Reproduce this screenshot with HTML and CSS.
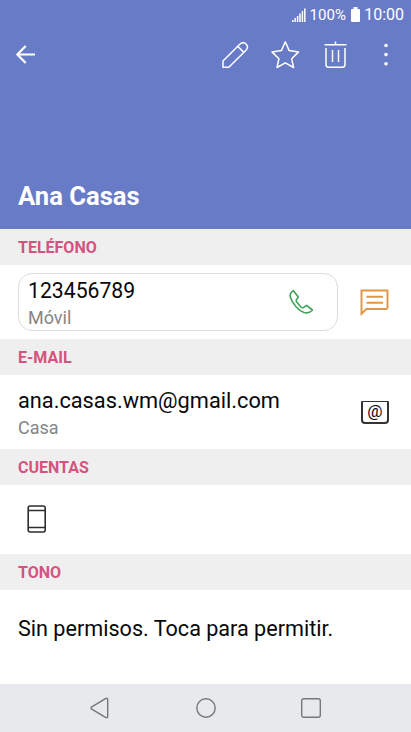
FILE: index.html
```html
<!DOCTYPE html>
<html lang="es">
<head>
<meta charset="utf-8">
<title>Ana Casas</title>
<link rel="stylesheet" href="styles.css">
</head>
<body>
<header class="hero">
  <div class="status">
    <svg class="signal" width="14" height="14" viewBox="0 0 14 14"><path d="M.8 12v2M3.200 10v4M5.600 8v6M8 5.500V14M10.400 3v11M12.800.5V14"/></svg>
    <span class="battery-text">100%</span>
    <svg class="battery" width="9" height="15" viewBox="0 0 9 15"><path d="M2.500 0h4v2H8q1 0 1 1v11q0 1-1 1H1q-1 0-1-1V3q0-1 1-1h1.500z"/></svg>
    <span class="time">10:00</span>
  </div>
  <div class="toolbar">
    <svg class="back" width="20" height="20" viewBox="0 0 20 20"><path d="M19 9.500H1.500M9.700 1L1.300 9.500l8.400 8.500"/></svg>
    <div class="actions">
      <svg width="30" height="30" viewBox="0 0 30 30"><path d="M3 27.300V21L19.800 4.200q3.200-3 6.200-.2t0 6.200L8.800 27.300zM17.700 6.300l6.100 6.100"/></svg>
      <svg width="30" height="30" viewBox="0 0 30 30"><path d="M15.300 1.800l3.900 8.800 9.400 1.300-6.900 6.900 1.900 8.700-8.300-4.700-8.300 4.700 1.900-8.700L2 11.900l9.400-1.300z"/></svg>
      <svg width="30" height="30" viewBox="0 0 30 30"><path d="M4.500 4.800h22M15.500 1.500v3M6 8v16.500q0 2.800 2.800 2.800h13.400q2.800 0 2.800-2.800V8M12.500 10v12M18.500 10v12"/></svg>
      <svg class="dots" width="30" height="30" viewBox="0 0 30 30"><circle cx="15" cy="5.500" r="1.800"/><circle cx="15" cy="14.600" r="1.800"/><circle cx="15" cy="23.800" r="1.800"/></svg>
    </div>
  </div>
  <h1>Ana Casas</h1>
</header>
<main>
  <h2>TELÉFONO</h2>
  <section class="row phone-row">
    <div class="phone-card">
      <div><p class="primary number">123456789</p><p class="secondary">Móvil</p></div>
      <svg class="call" width="28" height="28" viewBox="0 0 28 28"><path d="M6.300 2.600Q2.400 5 3.300 9C5.300 15.500 11.500 22.500 17 24.600q5 1.300 8.500-2.600l-5.900-4.600-3.300 2.300q-1.200.4-2.400-.7l-4.200-4.900q-.9-1.300-.4-2.200L11.300 9z"/></svg>
    </div>
    <svg class="message" width="29" height="27" viewBox="0 0 29 27"><path d="M1.500 1.500h26v17.300q0 1.200-1.200 1.200H6.300l-4.800 4.800zM6.500 7.700H23M6.500 13.700H23"/></svg>
  </section>
  <h2>E-MAIL</h2>
  <section class="row mail-row">
    <div><p class="primary mail">ana.casas.wm@gmail.com</p><p class="secondary">Casa</p></div>
    <span class="at">@</span>
  </section>
  <h2>CUENTAS</h2>
  <section class="row account-row">
    <svg class="device" width="20" height="28" viewBox="0 0 20 28"><rect x="1.200" y="1" width="17" height="26" rx="2"/><path d="M1.200 5.500h17M1.200 22.500h17"/></svg>
  </section>
  <h2>TONO</h2>
  <section class="row tone-row"><p class="primary tone">Sin permisos. Toca para permitir.</p></section>
</main>
<nav>
  <svg width="22" height="22" viewBox="0 0 22 22"><path d="M16.500 1.600L2.800 9.800q-1.600 1.200 0 2.400l13.700 8.200q2.200 1 2.200-1V2.600q0-2-2.200-1z"/></svg>
  <svg width="22" height="22" viewBox="0 0 22 22"><circle cx="11" cy="11" r="9.200"/></svg>
  <svg width="22" height="22" viewBox="0 0 22 22"><rect x="1.700" y="1.700" width="18.600" height="18.600" rx="2"/></svg>
</nav>
</body>
</html>
```
FILE: styles.css
```css
* { box-sizing: border-box; }
body { margin: 0; width: 411px; height: 732px; overflow: hidden; background: #fff; font-family: Roboto, sans-serif; color: #080808; display: flex; flex-direction: column; }
h1, h2, p { margin: 0; }
svg { display: block; flex: none; fill: none; }
.hero { height: 229px; flex: none; background: #687bc7; color: #fff; display: flex; flex-direction: column; }
.status { height: 30px; padding: 0 7px 1px 0; display: flex; align-items: center; justify-content: flex-end; }
.signal { stroke: #fff; stroke-width: 1.5; margin-right: 3px; }
.battery { fill: #fff; margin: 0 4px 0 5px; }
.battery-text { font-size: 15px; letter-spacing: .1px; }
.time { font-size: 16px; }
.toolbar { height: 50px; padding: 0 10.500px 0 16px; display: flex; align-items: center; justify-content: space-between; }
.toolbar svg { stroke: #fff; stroke-width: 1.5; stroke-linejoin: round; }
.toolbar .back { stroke-width: 2.200; }
.toolbar .dots { fill: #fff; stroke: none; }
.actions { display: flex; gap: 20.300px; }
h1 { margin: auto 18px 17px; font-size: 25.600px; line-height: 32px; font-weight: 700; }
h2 { height: 36px; padding: 1px 18px 0; background: #efefef; color: #d3547e; font-size: 16px; line-height: 36px; font-weight: 700; }
.row { display: flex; align-items: center; background: #fff; }
.phone-row { height: 74px; padding-left: 18px; }
.phone-card { width: 320px; height: 58px; border: 1px solid #dcdcdc; border-radius: 14px; display: flex; align-items: center; justify-content: space-between; padding: 3px 22.500px 0 9px; }
.call { stroke: #43a25b; stroke-width: 1.600; stroke-linejoin: round; margin-bottom: 3px; }
.message { margin-left: 22px; stroke: #e3963f; stroke-width: 1.900; }
.primary { font-size: 21.600px; line-height: 28px; white-space: nowrap; }
.number { font-size: 21.200px; }
.mail { font-size: 21.750px; }
.secondary { font-size: 18px; line-height: 26px; color: #858585; }
.mail-row { height: 74px; padding: 3px 22px 0 18px; justify-content: space-between; }
.at { width: 28px; height: 23px; margin-bottom: 3px; border: 2px solid #333; border-top-width: 1px; border-radius: 1px 1px 4px 4px; font-size: 17px; line-height: 18px; text-align: center; }
.account-row { height: 69px; padding: 0 0 2px 27px; }
.device { stroke: #2d2d2d; stroke-width: 1.600; }
.tone-row { height: 94px; padding: 0 18px 17px; }
nav { height: 48px; flex: none; display: flex; align-items: center; justify-content: center; gap: 83.500px; background: #e8e9ed; }
nav svg { stroke: #777; stroke-width: 1.400; }
```
